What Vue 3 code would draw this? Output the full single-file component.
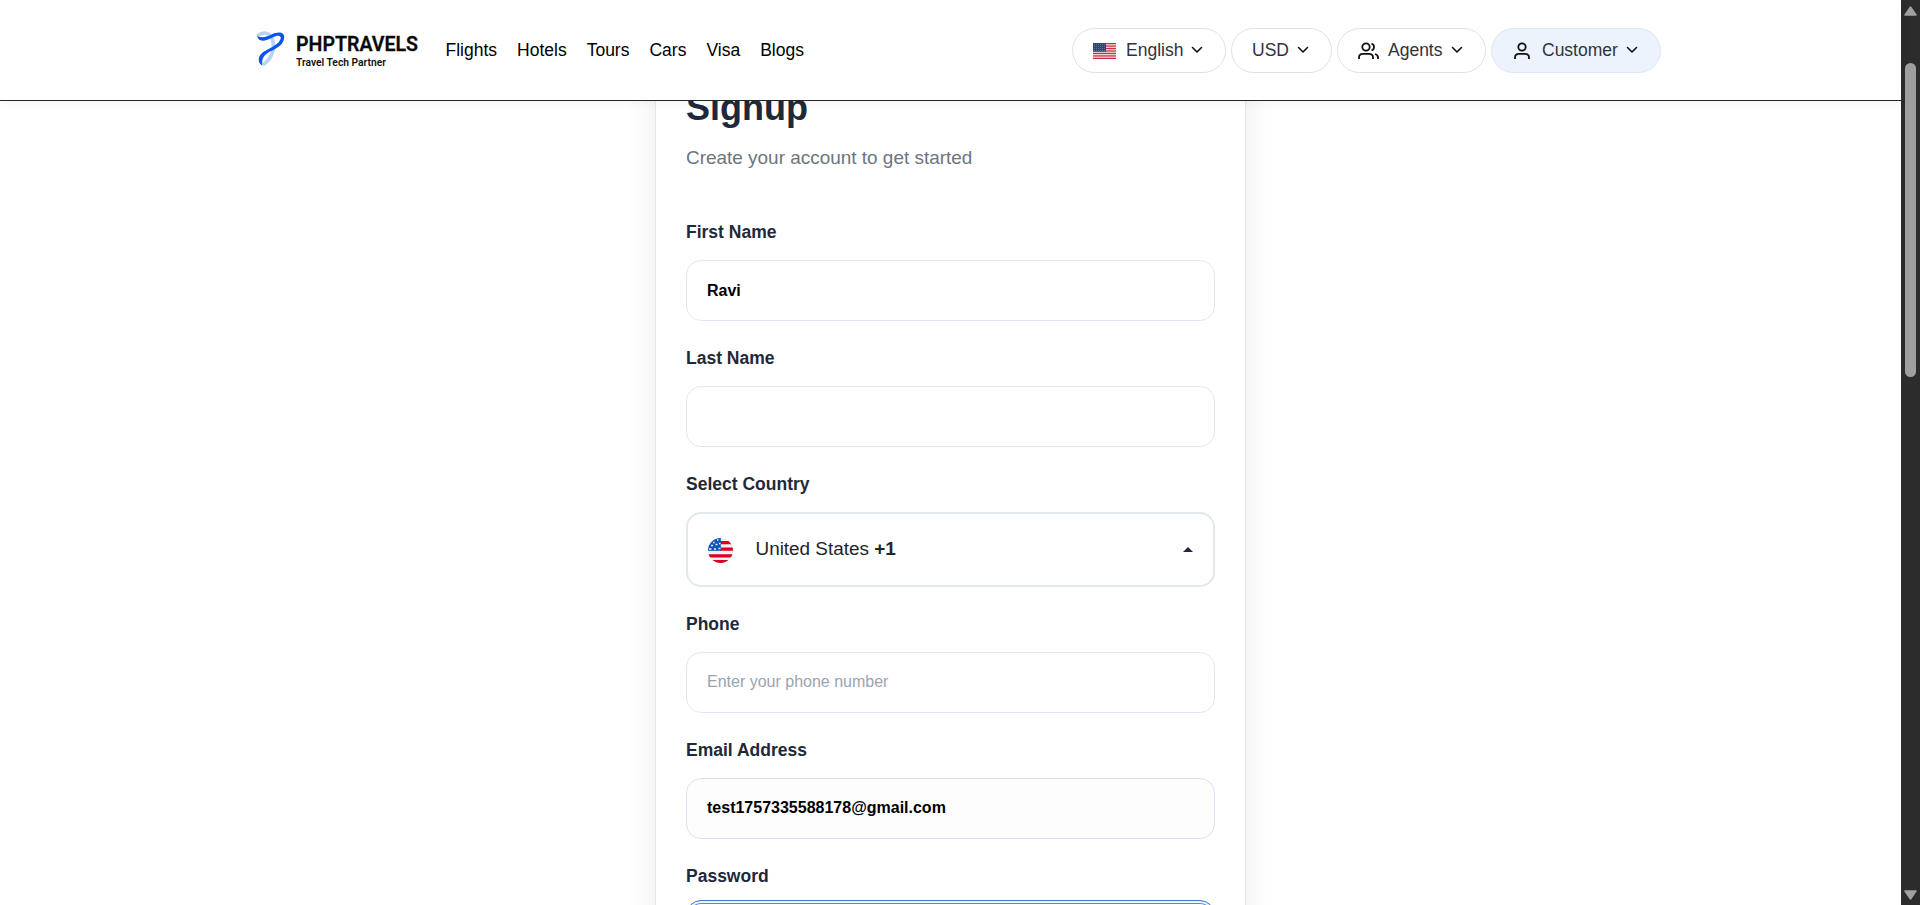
<script setup>
const links = ['Flights', 'Hotels', 'Tours', 'Cars', 'Visa', 'Blogs']
const stripes = [0, 2, 4, 6, 8, 10, 12]
</script>

<template>
  <div class="window">
    <div class="page">
      <header class="header">
        <svg class="logo" width="166" height="40" viewBox="0 0 166 40">
          <path d="M1.500 4.200C5 1 11 1.200 14 5.500C18.500 13 17 26 7 33" stroke="#b9d2f8" stroke-width="3.600" fill="none" stroke-linecap="round" />
          <path d="M0.200 5.300C6 7.500 10 5.500 15 3.200C19 1.300 27.300 -0.300 27.200 6.200C27 14 19 17.500 13 20.500C7.500 23.500 4.500 27 5.200 34.600C1 32.500 0.500 26 4.500 22.500C9 18.500 17 16 21.500 11.500C25.500 7 24 3.500 18.500 5.300C13.500 7 8 11.500 2.800 9C1.300 8.200 0.500 6.800 0.200 5.300Z" fill="#0a54f0" />
          <text x="39" y="20" class="logo-name" textLength="122" lengthAdjust="spacingAndGlyphs">PHPTRAVELS</text>
          <text x="39" y="34.500" class="logo-tag" textLength="90" lengthAdjust="spacingAndGlyphs">Travel Tech Partner</text>
        </svg>
        <nav class="nav">
          <a v-for="l in links" :key="l">{{ l }}</a>
        </nav>
        <div class="pills">
          <div class="pill english">
            <svg class="flag" width="23" height="16" viewBox="0 0 23 16">
              <rect width="23" height="16" fill="#f5dfe2" />
              <rect v-for="s in stripes" :key="s" y="0" width="23" height="1.230" :transform="`translate(0 ${s * 1.231})`" fill="#c8303f" />
              <rect width="13" height="8.600" fill="#2f4678" />
              <path d="M1 1.500h12M1 3.500h12M1 5.500h12M1 7.500h12" stroke="#7183a6" stroke-width=".7" stroke-dasharray="1 1" />
            </svg>
            <span>English</span>
            <svg class="chev" width="12" height="8" viewBox="0 0 12 8"><path d="M1.500 1.500L6 6L10.500 1.500" /></svg>
          </div>
          <div class="pill usd">
            <span>USD</span>
            <svg class="chev" width="12" height="8" viewBox="0 0 12 8"><path d="M1.500 1.500L6 6L10.500 1.500" /></svg>
          </div>
          <div class="pill agents">
            <svg class="icon" width="21" height="18" viewBox="0 0 21 18">
              <circle cx="8" cy="5" r="3.700" />
              <path d="M1 17V15.500C1 13 2.700 11.800 5 11.800H11C13.300 11.800 15 13 15 15.500V17M13.500 1.500A3.700 3.700 0 0 1 13.500 8.500M17 12C19 12.600 20 13.600 20 15.500V17" />
            </svg>
            <span>Agents</span>
            <svg class="chev" width="12" height="8" viewBox="0 0 12 8"><path d="M1.500 1.500L6 6L10.500 1.500" /></svg>
          </div>
          <div class="pill customer">
            <svg class="icon" width="16" height="18" viewBox="0 0 16 18">
              <circle cx="8" cy="5" r="3.700" />
              <path d="M1 17V15.500C1 13 2.700 11.800 5 11.800H11C13.300 11.800 15 13 15 15.500V17" />
            </svg>
            <span>Customer</span>
            <svg class="chev" width="12" height="8" viewBox="0 0 12 8"><path d="M1.500 1.500L6 6L10.500 1.500" /></svg>
          </div>
        </div>
      </header>

      <main class="main">
        <section class="card">
          <h1>Signup</h1>
          <p class="sub">Create your account to get started</p>
          <label>First Name</label>
          <div class="field strong">Ravi</div>
          <label>Last Name</label>
          <div class="field"></div>
          <label>Select Country</label>
          <div class="select">
            <svg class="round-flag" width="25" height="25" viewBox="0 0 25 25">
              <defs><clipPath id="round"><circle cx="12.500" cy="12.500" r="12.500" /></clipPath></defs>
              <g clip-path="url(#round)">
                <rect width="25" height="25" fill="#f0f0f0" />
                <path d="M12 4.700h13M12 11.200h13M0 17.800h25M0 23.500h25" stroke="#d80027" stroke-width="3.200" />
                <rect width="12.800" height="12.800" fill="#0e56b4" />
                <path d="M5 4.500h1.500M9 2h1.500M3 7.500h2M7.500 6.500h2M11 5.500h1.500M1 11h2.500M6 11h2M10.500 10.500h2" stroke="#f0f0f0" stroke-width="1.300" />
              </g>
            </svg>
            <span class="country">United States <b>+1</b></span>
            <svg class="caret" width="10" height="5" viewBox="0 0 10 5"><path d="M0 5L5 0L10 5Z" fill="#1e293b" /></svg>
          </div>
          <label>Phone</label>
          <div class="field placeholder">Enter your phone number</div>
          <label>Email Address</label>
          <div class="field strong email">test1757335588178@gmail.com</div>
          <label class="pw-label">Password</label>
          <div class="field password"></div>
        </section>
      </main>
    </div>
    <div class="scrollbar">
      <svg width="13" height="10" viewBox="0 0 13 10"><path d="M6.500 1L12 9H1Z" fill="#a0a0a0" stroke="#a0a0a0" stroke-width="1.500" stroke-linejoin="round" /></svg>
      <div class="thumb"></div>
      <svg class="down" width="13" height="10" viewBox="0 0 13 10"><path d="M6.500 9L12 1H1Z" fill="#a0a0a0" stroke="#a0a0a0" stroke-width="1.500" stroke-linejoin="round" /></svg>
    </div>
  </div>
</template>

<style>
html, body { overflow: hidden; background: #fff; }
</style>

<style scoped>
* { box-sizing: border-box; }
.window { display: flex; width: 1920px; height: 905px; font-family: "Liberation Sans", Arial, sans-serif; background: #fff; overflow: hidden; }
.page { width: 1901px; height: 905px; display: flex; flex-direction: column; }
.header { position: relative; z-index: 2; flex: none; height: 101px; display: flex; align-items: flex-start; padding: 28px 240px 0 257px; border-bottom: 1px solid #212529; background: #fff; box-shadow: 0 2px 10px rgba(0, 0, 0, .05); }
.logo { flex: none; margin-top: 3px; overflow: visible; }
.logo-name { font: 600 20.500px Roboto, sans-serif; fill: #0b0b0b; stroke: #0b0b0b; stroke-width: .3px; }
.logo-tag { font: 600 11px Roboto, sans-serif; fill: #111; }
.nav { display: flex; gap: 20px; margin: 12px 0 0 22.500px; font-size: 17.500px; line-height: 20px; color: #000; }
.pills { display: flex; gap: 5px; margin-left: auto; }
.pill { height: 45px; display: flex; align-items: center; border: 1px solid #dee2e6; border-radius: 23px; font-size: 17.500px; line-height: 20px; color: #30343b; }
.pill span { padding-bottom: 2px; }
.chev { margin: 0 0 1px auto; fill: none; stroke: #111; stroke-width: 1.600; stroke-linecap: round; stroke-linejoin: round; }
.icon { fill: none; stroke: #111; stroke-width: 1.800; stroke-linecap: butt; }
.english { width: 154px; padding: 0 22px 0 20px; }
.english span { margin-left: 10px; }
.usd { width: 101px; padding: 0 22px 0 20px; }
.agents { width: 149px; padding: 0 22px 0 20px; }
.agents span { margin-left: 9px; }
.customer { width: 170px; padding: 0 22px; background: #ecf3fc; border-color: #dfe7f0; }
.customer span { margin-left: 12px; }
.main { flex: 1; min-height: 0; display: flex; justify-content: center; align-items: flex-start; overflow: hidden; }
.card { width: 591px; height: 960px; margin-top: -44px; padding: 30px; border: 1px solid #e2e8f0; background: #fff; box-shadow: 0 4px 30px rgba(0, 0, 0, .08); }
h1 { margin: 0; font-size: 36px; line-height: 40px; font-weight: 700; color: #1e293b; }
.sub { margin: 18px 0 52px; font-size: 18.950px; line-height: 24px; color: #6c757d; }
label { display: block; height: 20px; margin-bottom: 18px; font-size: 17.500px; line-height: 20px; font-weight: 700; color: #1e293b; }
.field { height: 61px; margin-bottom: 27px; padding: 0 20px; border: 1px solid #e2e8f0; border-radius: 15px; background: #fff; font-size: 16px; line-height: 59px; color: #000; }
.strong { font-weight: 700; }
.placeholder { color: #9ca3af; line-height: 58px; }
.email { border-color: #d5e3f7; background: #fdfdfe; line-height: 58px; }
.select { height: 75px; margin-bottom: 27px; display: flex; align-items: center; padding: 0 20px; border: 2px solid #e2e8f0; border-radius: 15px; background: #fff; }
.round-flag { margin-top: 2px; }
.country { margin: -2px 0 0 22.500px; font-size: 18.900px; line-height: 24px; color: #212529; }
.caret { margin: 0 0 1px auto; }
.pw-label { margin-bottom: 14px; }
.password { border: 1px solid #3b76dd; box-shadow: inset 0 0 0 2px #eef4fe, inset 0 0 0 3px #4f8bef; }
.scrollbar { width: 19px; height: 905px; display: flex; flex-direction: column; align-items: center; padding: 6px 0 5px; background: #2c2c2c; }
.thumb { width: 11px; height: 314px; margin-top: 47px; border-radius: 6px; background: #9f9f9f; }
.down { margin-top: auto; }
</style>
